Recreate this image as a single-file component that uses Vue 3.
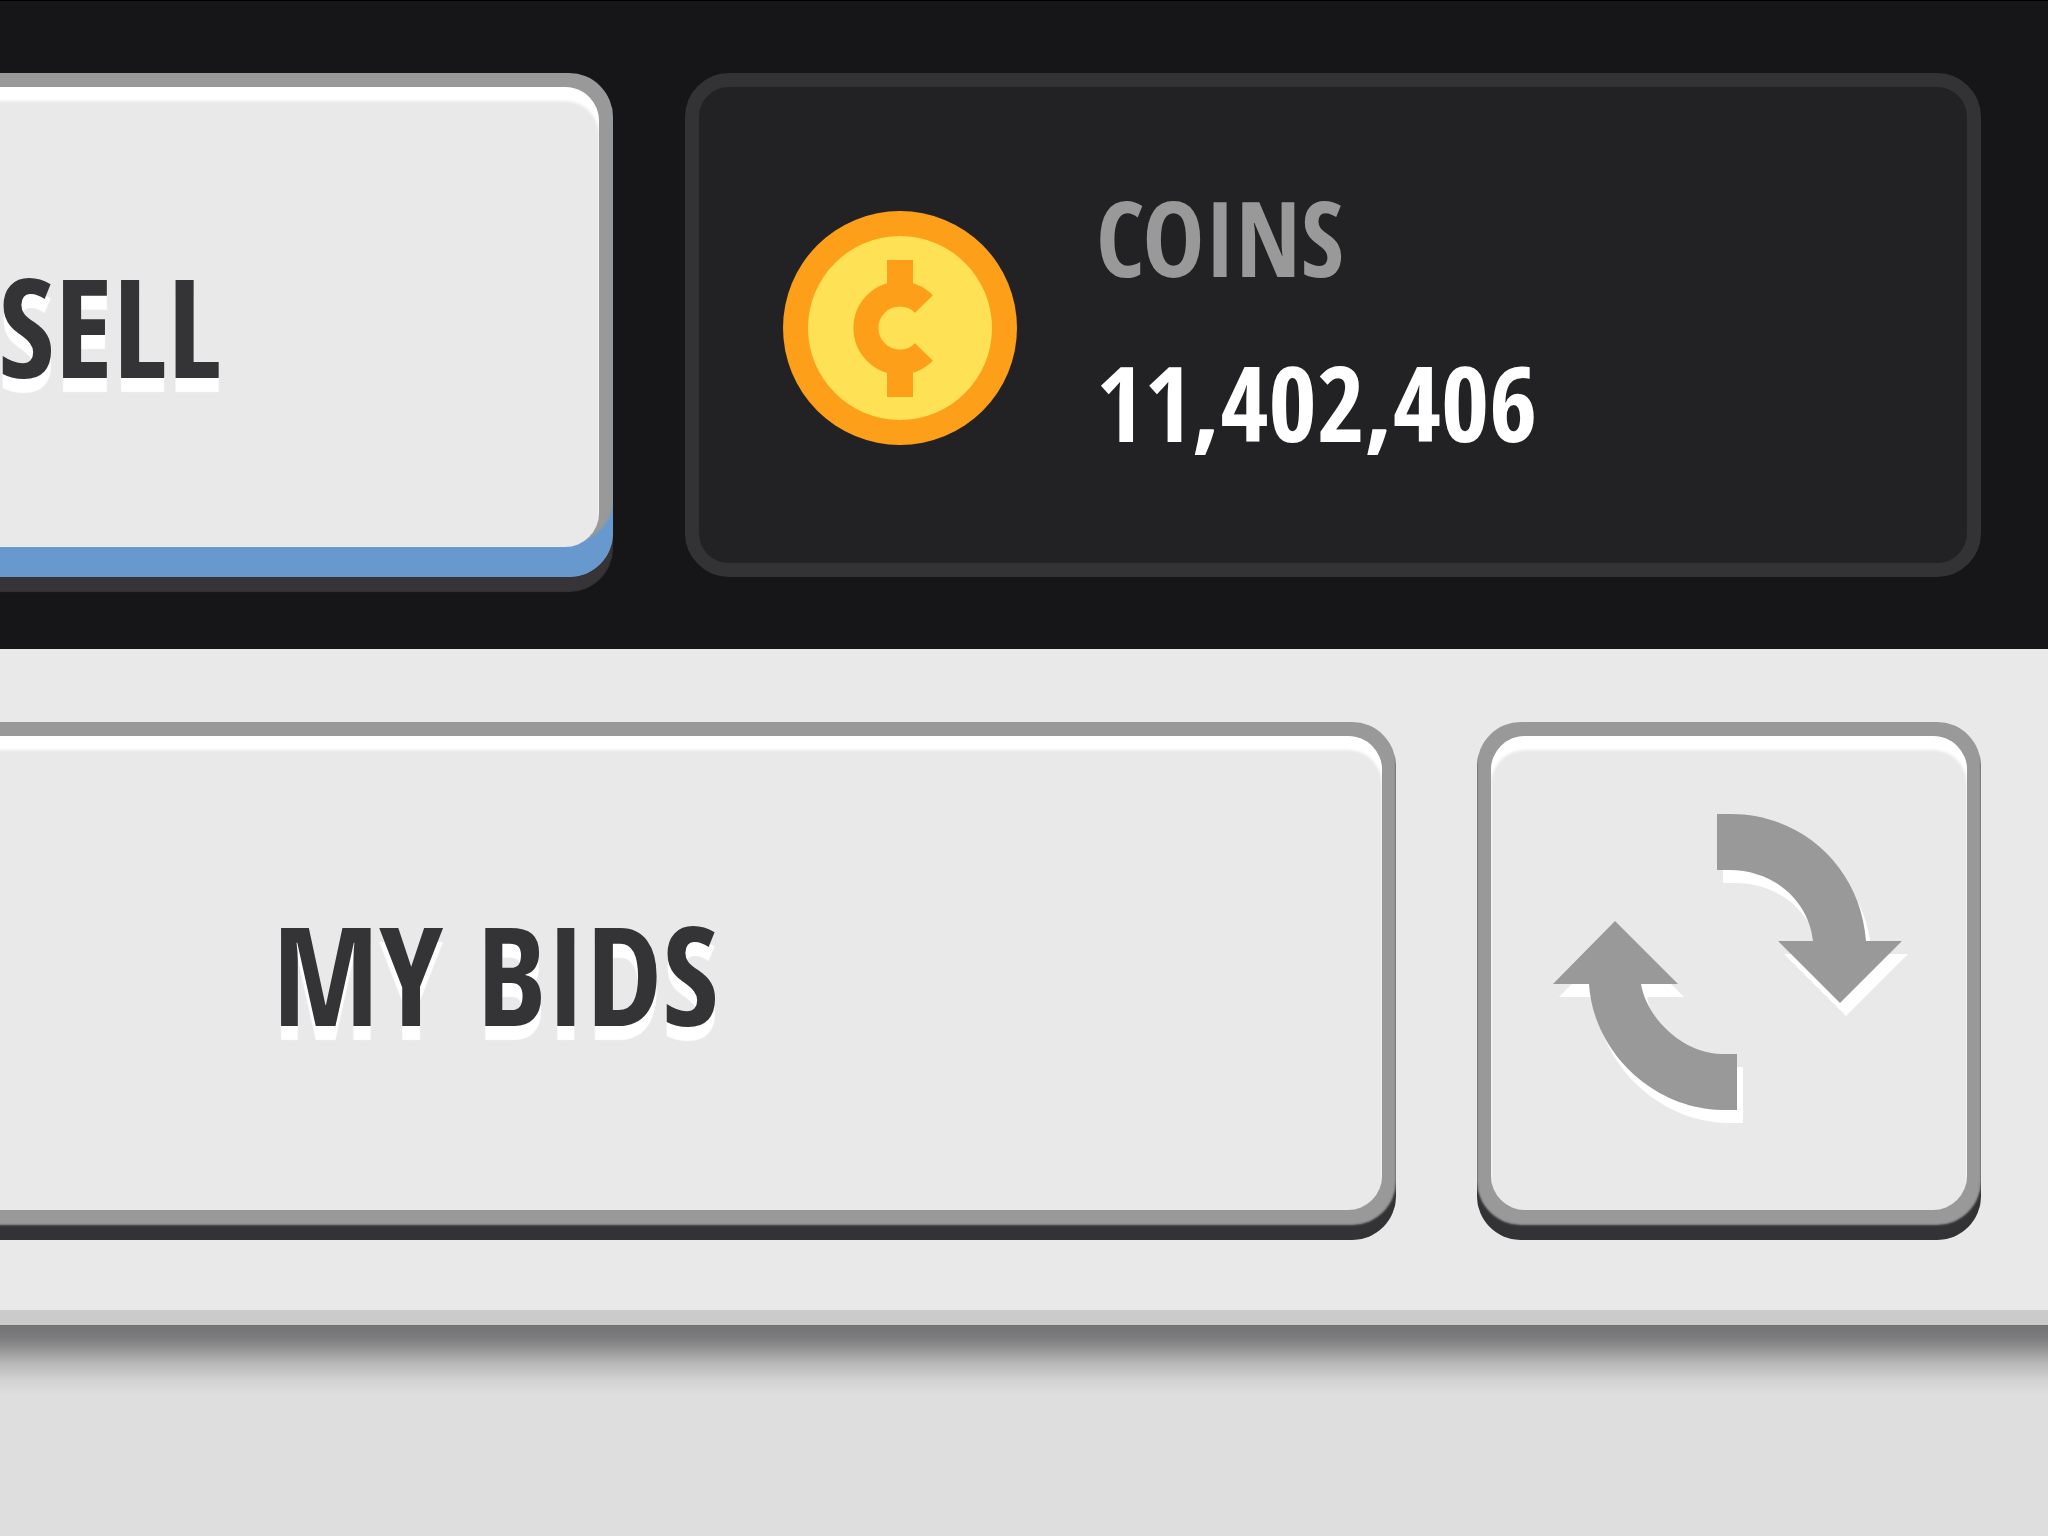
<script setup>
import { ref } from 'vue'

const coins = ref(11402406)
const format = (n) => n.toLocaleString('en-US')
</script>

<template>
  <div class="app">
    <header class="top">
      <button class="key key-active" type="button"><span class="face">SELL</span></button>
      <section class="wallet" aria-label="Wallet">
        <svg class="coin" viewBox="0 0 234 234" aria-hidden="true">
          <circle cx="117" cy="117" r="117" fill="#fd9f19" />
          <circle cx="117" cy="117" r="92" fill="#ffe155" />
          <path d="M104 49h26v32h-26zM104 153h26v33h-26z" fill="#fd9f19" />
          <path d="M141 93A34 34 0 1 0 141 141" fill="none" stroke="#fd9f19" stroke-width="25" />
        </svg>
        <dl class="balance">
          <dt>COINS</dt>
          <dd>{{ format(coins) }}</dd>
        </dl>
      </section>
    </header>

    <nav class="tabs">
      <button class="key" type="button"><span class="face">MY BIDS</span></button>
      <button class="key" type="button" aria-label="Refresh">
        <span class="face">
          <svg class="refresh" viewBox="0 0 360 326" aria-hidden="true">
            <defs>
              <g id="refresh-arrows">
                <path d="M168 4H182C254 4 312 59 317 131H353L291 193L229 131H264C260 92 226 60 180 60H168Z" />
                <path d="M66 111L129 174H92C98 209 134 243 172 244H188V300H172C102 298 44 240 40 174H4Z" />
              </g>
            </defs>
            <use class="arrows-light" href="#refresh-arrows" x="6" y="13" />
            <use href="#refresh-arrows" fill="#999" />
          </svg>
        </span>
      </button>
    </nav>

    <main class="content"></main>
  </div>
</template>

<style>
body {
  background: #dedede;
}
</style>

<style scoped>
.app {
  min-height: 100vh;
  overflow: hidden;
  background: #dedede;
  font-family: "Open Sans Condensed", "Open Sans", sans-serif;
  font-weight: 700;
}

.top {
  display: grid;
  grid-template-columns: 1fr 1296px;
  gap: 72px;
  padding: 72px 67px 72px 0;
  border-top: 1px solid #000;
  background: #161618;
}

.top .key {
  margin-left: -393px;
}

.tabs {
  display: grid;
  grid-template-columns: 1fr 504px;
  gap: 81px;
  padding: 73px 67px 70px 0;
  border-bottom: 15px solid #cbcbcb;
  background: #e9e9e9;
}

.tabs .key:first-child {
  margin-left: -405px;
}

.key {
  display: flex;
  height: 518px;
  padding: 14px 14px 30px;
  border: 0;
  border-radius: 44px;
  background: #999;
  box-shadow: inset 0 -15px 2px #333335;
  color: #343436;
  font: inherit;
  font-size: 136px;
  line-height: 165px;
  text-shadow: 0 14px 1px #fff;
}

.key-active {
  height: 504px;
  box-shadow: inset 0 -34px 2px #6899ce, 0 15px 1px #363436;
}

.face {
  display: flex;
  flex: 1;
  align-items: center;
  justify-content: center;
  border-radius: 34px;
  background: #e9e9e9;
  box-shadow: inset 0 14px 3px #fff;
}

.key-active .face {
  padding-top: 16px;
}

.refresh {
  width: 360px;
  height: 326px;
}

.arrows-light {
  fill: #fff;
}

.wallet {
  display: flex;
  align-items: center;
  gap: 79px;
  padding: 6px 84px 0;
  border: 14px solid #333335;
  border-radius: 44px;
  background: #222224;
}

.coin {
  width: 234px;
  height: 234px;
}

.balance {
  margin: 0;
  padding-bottom: 18px;
  font-size: 104px;
  line-height: 165px;
}

.balance dt {
  color: #999;
}

.balance dd {
  margin: 0;
  color: #fff;
}

.content {
  height: 211px;
  background: linear-gradient(#747276 0, #7b7a7c 12px, #8f8f8f 22px, #b7b7b7 38px, #d2d2d2 55px, #dedede 70px);
}
</style>
